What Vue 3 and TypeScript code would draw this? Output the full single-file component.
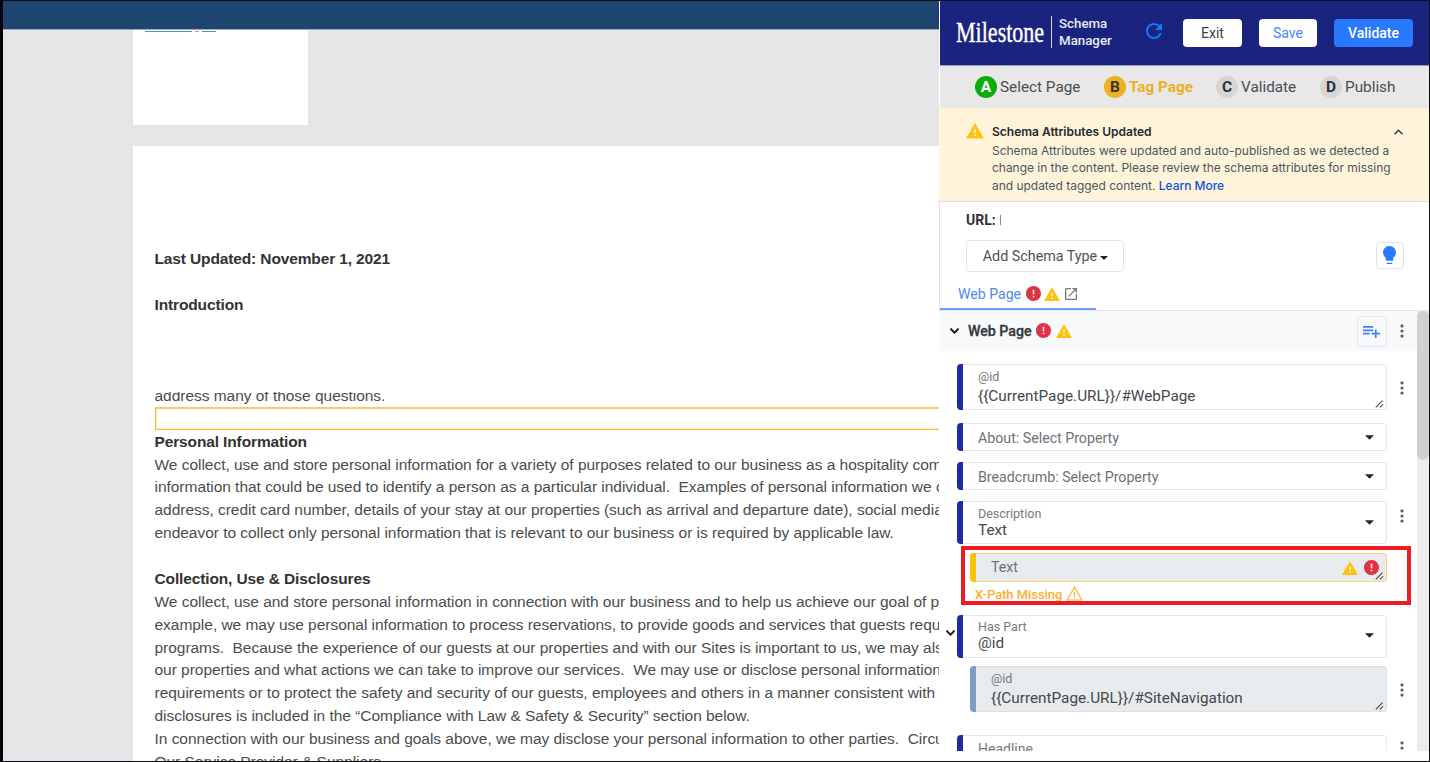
<script setup lang="ts">
import { h, type FunctionalComponent } from 'vue'

const glyphs: Record<string, { box: string; d: string; under?: string }> = {
  refresh: {
    box: '4 4 16 16',
    d: 'M17.65 6.35C16.2 4.9 14.21 4 12 4c-4.42 0-7.99 3.58-7.99 8s3.57 8 7.99 8c3.73 0 6.84-2.55 7.73-6h-2.08c-.82 2.33-3.04 4-5.65 4-3.31 0-6-2.69-6-6s2.69-6 6-6c1.66 0 3.14.69 4.22 1.78L13 11h7V4l-2.35 2.35z',
  },
  warning: {
    box: '1 2 22 19',
    d: 'M1 21h22L12 2 1 21zm12-3h-2v-2h2v2zm0-4h-2v-4h2v4z',
    under: 'M10 9h4v10h-4z',
  },
  warningOutline: {
    box: '1 2 22 19',
    d: 'M12 4.9 20.6 19.6H3.4L12 4.9M12 2 1 21h22L12 2zm.8 14.2h-1.6v1.8h1.6v-1.8zm0-6.2h-1.6v5h1.6v-5z',
  },
  error: {
    box: '2 2 20 20',
    d: 'M12 2C6.48 2 2 6.48 2 12s4.48 10 10 10 10-4.48 10-10S17.52 2 12 2zm1 15h-2v-2h2v2zm0-4h-2V7h2v6z',
    under: 'M10 6h4v12h-4z',
  },
  open: {
    box: '3 3 18 18',
    d: 'M19 19H5V5h7V3H5a2 2 0 0 0-2 2v14a2 2 0 0 0 2 2h14c1.1 0 2-.9 2-2v-7h-2v7zM14 3v2h3.59l-9.83 9.83 1.41 1.41L19 6.41V10h2V3h-7z',
  },
  playlist: {
    box: '2 6 20 14',
    d: 'M14 10H2v2h12v-2zm0-4H2v2h12V6zm4 8v-4h-2v4h-4v2h4v4h2v-4h4v-2h-4zM2 16h8v-2H2v2z',
  },
  bulb: {
    box: '5 2 14 20',
    d: 'M9 21c0 .55.45 1 1 1h4c.55 0 1-.45 1-1v-1H9v1zm3-19C8.14 2 5 5.14 5 9c0 2.38 1.19 4.47 3 5.74V17c0 .55.45 1 1 1h6c.55 0 1-.45 1-1v-2.26c1.81-1.27 3-3.36 3-5.74 0-3.86-3.14-7-7-7z',
  },
  up: { box: '6 8 12 7.4', d: 'M12 8l-6 6 1.41 1.41L12 10.83l4.59 4.58L18 14z' },
  down: { box: '6 8.6 12 7.4', d: 'M7.41 8.59 12 13.17l4.59-4.58L18 10l-6 6-6-6z' },
  caret: { box: '0 0 10 5', d: 'M0 0h10L5 5z' },
  dots: {
    box: '0 0 4 14',
    d: 'M2 .3a1.6 1.6 0 1 0 0 3.2 1.6 1.6 0 0 0 0-3.2zm0 5.1a1.6 1.6 0 1 0 0 3.2 1.6 1.6 0 0 0 0-3.2zm0 5.1a1.6 1.6 0 1 0 0 3.2 1.6 1.6 0 0 0 0-3.2z',
  },
  grip: { box: '0 0 10 9', d: 'M.4 8 8 .4l.9.8L1.3 8.8zM5 8 8.6 4.4l.9.8L5.9 8.8z' },
}

const Icon: FunctionalComponent<{ name: string }> = (props) => {
  const g = glyphs[props.name]
  return h('svg', { viewBox: g.box, 'aria-hidden': 'true' }, [
    g.under ? h('path', { d: g.under, fill: '#fff' }) : null,
    h('path', { d: g.d, fill: 'currentColor' }),
  ])
}
Icon.props = ['name']

type Kind = 'text' | 'bold' | 'blank' | 'cut' | 'highlight'
const lines: { kind: Kind; text?: string }[] = [
  { kind: 'bold', text: 'Last Updated: November 1, 2021' },
  { kind: 'blank' },
  { kind: 'bold', text: 'Introduction' },
  { kind: 'blank' },
  { kind: 'blank' },
  { kind: 'blank' },
  { kind: 'cut', text: 'address many of those questions.' },
  { kind: 'highlight' },
  { kind: 'bold', text: 'Personal Information' },
  { kind: 'text', text: 'We collect, use and store personal information for a variety of purposes related to our business as a hospitality company.' },
  { kind: 'text', text: 'information that could be used to identify a person as a particular individual.  Examples of personal information we collect' },
  { kind: 'text', text: 'address, credit card number, details of your stay at our properties (such as arrival and departure date), social media' },
  { kind: 'text', text: 'endeavor to collect only personal information that is relevant to our business or is required by applicable law.' },
  { kind: 'blank' },
  { kind: 'bold', text: 'Collection, Use & Disclosures' },
  { kind: 'text', text: 'We collect, use and store personal information in connection with our business and to help us achieve our goal of providing' },
  { kind: 'text', text: 'example, we may use personal information to process reservations, to provide goods and services that guests request' },
  { kind: 'text', text: 'programs.  Because the experience of our guests at our properties and with our Sites is important to us, we may also' },
  { kind: 'text', text: 'our properties and what actions we can take to improve our services.  We may use or disclose personal information' },
  { kind: 'text', text: 'requirements or to protect the safety and security of our guests, employees and others in a manner consistent with' },
  { kind: 'text', text: 'disclosures is included in the “Compliance with Law & Safety & Security” section below.' },
  { kind: 'text', text: 'In connection with our business and goals above, we may disclose your personal information to other parties.  Circumstances' },
  { kind: 'text', text: 'Our Service Provider & Suppliers' },
]

const steps = [
  { letter: 'A', label: 'Select Page', state: 'done' },
  { letter: 'B', label: 'Tag Page', state: 'current' },
  { letter: 'C', label: 'Validate', state: 'todo' },
  { letter: 'D', label: 'Publish', state: 'todo' },
]

interface Field {
  id: string
  label?: string
  value?: string
  placeholder?: string
  control: 'select' | 'area'
  menu?: boolean
  nested?: boolean
  warn?: boolean
  expand?: boolean
}
const fields: Field[] = [
  { id: 'page-id', label: '@id', value: '{{CurrentPage.URL}}/#WebPage', control: 'area', menu: true },
  { id: 'about', placeholder: 'About: Select Property', control: 'select' },
  { id: 'breadcrumb', placeholder: 'Breadcrumb: Select Property', control: 'select' },
  { id: 'description', label: 'Description', value: 'Text', control: 'select', menu: true },
  { id: 'description-text', placeholder: 'Text', control: 'area', nested: true, warn: true },
  { id: 'has-part', label: 'Has Part', value: '@id', control: 'select', expand: true },
  { id: 'part-id', label: '@id', value: '{{CurrentPage.URL}}/#SiteNavigation', control: 'area', menu: true, nested: true },
  { id: 'headline', label: 'Headline', value: '', control: 'select', menu: true },
]
</script>

<template>
  <div class="screen">
    <main class="site">
      <div class="site-bar"></div>
      <div class="logo-card">
        <span class="rule long"></span><span class="rule dot"></span><span class="rule short"></span>
      </div>
      <article class="policy">
        <p v-for="(line, i) in lines" :key="i" :class="['line', line.kind]">{{ line.text }}</p>
      </article>
    </main>

    <aside class="panel">
      <header class="top">
        <span class="brand"><span class="brand-text">Milestone</span></span>
        <span class="product">Schema<br />Manager</span>
        <Icon name="refresh" class="refresh" />
        <button class="btn exit">Exit</button>
        <button class="btn save">Save</button>
        <button class="btn validate">Validate</button>
      </header>

      <nav class="steps">
        <span v-for="s in steps" :key="s.letter" :class="['step', s.state, 'step-' + s.letter]">
          <b class="badge">{{ s.letter }}</b><span class="step-label">{{ s.label }}</span>
        </span>
      </nav>

      <section class="alert">
        <Icon name="warning" class="alert-icon" />
        <div class="alert-body">
          <strong class="alert-title">Schema Attributes Updated</strong>
          <p class="alert-text">
            Schema Attributes were updated and auto-published as we detected a<br />
            change in the content. Please review the schema attributes for missing<br />
            and updated tagged content. <a class="more">Learn More</a>
          </p>
        </div>
        <Icon name="up" class="alert-close" />
      </section>

      <section class="tools">
        <div class="url"><b>URL:</b><i class="url-bar"></i></div>
        <div class="tool-row">
          <button class="add-type"><span>Add Schema Type</span><Icon name="caret" class="small-caret" /></button>
          <button class="hint"><Icon name="bulb" class="bulb" /></button>
        </div>
        <div class="tab">
          <span class="tab-label">Web Page</span>
          <Icon name="error" class="error" />
          <Icon name="warning" class="warning" />
          <Icon name="open" class="open" />
        </div>
      </section>

      <div class="scroll">
        <div class="content">
          <div class="group-head">
            <Icon name="down" class="chev" />
            <b class="group-title">Web Page</b>
            <Icon name="error" class="error" />
            <Icon name="warning" class="warning" />
            <button class="add-list"><Icon name="playlist" class="playlist" /></button>
            <span class="menu"><Icon name="dots" class="dots" /></span>
          </div>

          <div v-for="f in fields" :key="f.id" :class="['item', f.id]">
            <div class="row">
              <span class="lead" :class="{ deep: f.nested }"><Icon v-if="f.expand" name="down" class="chev" /></span>
              <div :class="['field', f.control, { nested: f.nested, warn: f.warn }]">
                <span v-if="f.label" class="label">{{ f.label }}</span>
                <span v-if="f.value" class="value">{{ f.value }}</span>
                <span v-if="f.placeholder" class="placeholder">{{ f.placeholder }}</span>
                <Icon v-if="f.control === 'select'" name="caret" class="caret" />
                <Icon v-else name="grip" class="grip" />
                <span v-if="f.warn" class="marks">
                  <Icon name="warning" class="warning" /><Icon name="error" class="error" />
                </span>
              </div>
              <span class="menu"><Icon v-if="f.menu" name="dots" class="dots" /></span>
            </div>
            <div v-if="f.warn" class="missing">X-Path Missing<Icon name="warningOutline" class="outline" /></div>
            <div v-if="f.warn" class="callout"></div>
          </div>
        </div>
        <div class="track"><div class="thumb"></div></div>
      </div>
    </aside>
  </div>
</template>

<style>
body {
  margin: 0;
  overflow: hidden;
}
</style>

<style scoped>
.screen {
  box-sizing: border-box;
  display: flex;
  width: 1430px;
  height: 762px;
  overflow: hidden;
  border: 1px solid #101014;
  border-left: 3px solid #050507;
  background: #fff;
  font-family: Roboto, "Liberation Sans", sans-serif;
}
svg {
  display: block;
  flex: none;
}
button {
  padding: 0;
  border: 0;
  font-family: inherit;
}

/* Website preview */
.site {
  width: 936px;
  flex: none;
  overflow: hidden;
  background: #e4e5e7;
}
.site-bar {
  height: 28px;
  background: #1d4570;
  border-bottom: 1px solid #a3aac0;
}
.logo-card {
  display: flex;
  box-sizing: border-box;
  width: 175px;
  height: 95px;
  margin-left: 130px;
  padding: 1px 0 0 12px;
  background: #fff;
}
.rule {
  height: 1px;
  background: #4c93c9;
}
.rule.long { width: 47px; }
.rule.dot { width: 4px; margin: 0 3px; background: #d58ba5; }
.rule.short { width: 14px; }
.policy {
  box-sizing: border-box;
  height: 640px;
  margin: 21px 0 0 130px;
  padding: 101.9px 0 0 21.5px;
  background: #fff;
  font-family: "Liberation Sans", Arial, sans-serif;
}
.line {
  height: 22.87px;
  margin: 0;
  line-height: 22.87px;
  font-size: 15.5px;
  letter-spacing: -0.03px;
  white-space: pre;
  color: #4c4c4c;
}
.line.bold {
  font-weight: 700;
  letter-spacing: -0.13px;
  color: #333;
}
.line.cut {
  clip-path: inset(7px 0 0 0);
}
.line.highlight {
  box-sizing: border-box;
  margin-top: -0.5px;
  margin-bottom: 0.5px;
  border: 1px solid #fbba3c;
  border-top: 2px solid #fcca6c;
  border-right: 0;
  box-shadow: inset 1px -1px 0 #fee9bd;
}

/* Side panel */
.panel {
  display: flex;
  flex-direction: column;
  width: 490px;
  height: 760px;
  background: #fff;
}
.top {
  display: flex;
  align-items: center;
  box-sizing: border-box;
  height: 65px;
  margin-left: 1px;
  padding: 0 0 1px 16px;
  background: #1a237e;
  border-bottom: 1px solid #9a9eb8;
}
.brand {
  width: 95px;
  height: 32px;
  margin-top: -1px;
  border-right: 1px solid #d9dbec;
}
.brand-text {
  display: block;
  width: 130px;
  transform: scaleX(0.76);
  transform-origin: 0 0;
  font: 400 29px/33px "Liberation Serif", serif;
  color: #fff;
  -webkit-text-stroke: 0.4px #fff;
}
.product {
  width: 87px;
  margin: 0 0 0 7px;
  font-size: 13.3px;
  line-height: 16.5px;
  font-weight: 500;
  color: #e9eaf5;
}
.refresh {
  width: 16px;
  height: 16px;
  margin-top: -3px;
  color: #0d7bff;
}
.btn {
  height: 28px;
  border-radius: 4px;
  background: #fff;
  font-size: 14px;
}
.exit { width: 59px; margin-left: 21px; color: #3c4043; }
.save { width: 58px; margin-left: 17px; color: #4a86f7; }
.validate { width: 79px; margin-left: 17px; background: #2979ff; color: #fff; font-weight: 500; }

.steps {
  display: flex;
  align-items: center;
  height: 42px;
  margin-left: 1px;
  background: #e8e8e8;
}
.step {
  display: flex;
  align-items: center;
  font-size: 15.3px;
  color: #4a4d52;
}
.step-A { width: 129px; margin-left: 35px; }
.step-B { width: 112px; }
.step-C { width: 104px; }
.badge {
  width: 22px;
  height: 22px;
  margin-right: 3px;
  border-radius: 50%;
  background: #d6d6d6;
  color: #2c3035;
  text-align: center;
  line-height: 22px;
  font-size: 15.5px;
}
.done .badge { background: #0aad0a; color: #fff; }
.current .badge { background: #ecb121; color: #3b3420; }
.current .step-label { color: #ecb121; font-weight: 700; }

.alert {
  display: flex;
  align-items: flex-start;
  box-sizing: border-box;
  height: 94px;
  padding: 15px 26px 0 27px;
  background: #fff4da;
  border-bottom: 1px solid #e4e2df;
  font-family: Inter, sans-serif;
}
.alert-icon { width: 18px; height: 15.5px; color: #ffc210; }
.alert-body { width: 407px; margin-left: 8px; }
.alert-title {
  display: block;
  font-size: 12px;
  line-height: 18px;
  font-weight: 600;
  color: #222a33;
}
.alert-text {
  margin: 0.6px 0 0;
  font-size: 12px;
  line-height: 17.8px;
  letter-spacing: -0.03px;
  white-space: nowrap;
  color: #4c5661;
}
.more { color: #0d52e5; font-weight: 500; }
.alert-close { width: 9px; height: 6px; margin-top: 6px; margin-left: -5px; color: #333b45; }

.tools {
  display: flex;
  flex-direction: column;
  box-sizing: border-box;
  height: 109px;
  padding: 0 24px 0 26px;
  border-left: 1px solid #e2e3e6;
  border-bottom: 1px solid #e4e6e9;
}
.url {
  display: flex;
  align-items: center;
  box-sizing: border-box;
  height: 38px;
  padding-bottom: 1px;
  font-size: 14px;
  color: #2e3338;
}
.url-bar { width: 1px; height: 10px; margin-left: 4px; background: #8a8a8a; }
.tool-row {
  display: flex;
  align-items: center;
  justify-content: space-between;
  height: 33px;
  padding-top: 0.5px;
}
.add-type {
  display: flex;
  align-items: center;
  justify-content: center;
  box-sizing: border-box;
  width: 158px;
  height: 32px;
  padding-left: 1px;
  border: 1px solid #e1e4e8;
  border-radius: 4px;
  background: #fff;
  font-size: 14.3px;
  color: #4e5358;
}
.small-caret { width: 8px; height: 4px; margin: 4px 0 0 3px; color: #222; }
.hint {
  display: flex;
  align-items: center;
  justify-content: center;
  box-sizing: border-box;
  width: 28px;
  height: 27px;
  margin: -2px 1px 0 0;
  border: 1px solid #dfe3ea;
  border-radius: 4px;
  background: #fff;
}
.bulb { width: 13px; height: 18.5px; margin-left: -1px; color: #2979ff; }
.tab {
  display: flex;
  align-items: center;
  box-sizing: border-box;
  width: 156px;
  height: 38px;
  margin-left: -26px;
  padding: 7px 0 0 18px;
  border-bottom: 2px solid #6b9ff7;
  font-size: 14.1px;
  color: #4a8af4;
}
.tab .error { margin-left: 5px; }
.tab .warning { margin-left: 3px; }
.error { width: 15px; height: 15px; color: #dc3545; }
.warning { width: 16px; height: 14px; color: #ffc210; }
.open { width: 12px; height: 12px; margin-left: 5px; color: #777b80; }

.scroll {
  display: flex;
  height: 440px;
  margin-left: 1px;
  overflow: hidden;
}
.content { width: 477px; flex: none; }
.track { flex: 1; background: #ececec; }
.thumb { height: 149px; border-radius: 6px; background: #d0d0d0; }

.group-head {
  display: flex;
  align-items: center;
  height: 40px;
  padding-left: 10px;
  background: #f8f9fb;
  color: #33383d;
}
.chev { width: 9px; height: 6px; color: #111; stroke: currentColor; stroke-width: 0.8px; }
.group-title { margin: -1px 4px 0 9px; font-size: 14.2px; font-weight: 500; -webkit-text-stroke: 0.3px; }
.group-head .error, .group-head .warning { margin-top: -1px; }
.group-head .warning { margin-left: 5px; }
.add-list {
  display: flex;
  align-items: center;
  justify-content: center;
  box-sizing: border-box;
  width: 30px;
  height: 31px;
  margin: 1px 0 0 auto;
  border: 1px solid #e3e6ea;
  border-radius: 4px;
  background: transparent;
}
.playlist { width: 17px; height: 12px; margin-left: -1px; color: #3d82f5; }
.menu { display: flex; justify-content: center; box-sizing: border-box; width: 30px; padding-right: 1px; flex: none; }
.dots { width: 4px; height: 14px; color: #5f5f5f; }

.item { position: relative; margin-bottom: 11px; }
.row { display: flex; align-items: center; }
.lead { display: flex; justify-content: center; width: 17px; flex: none; }
.lead .chev { margin: -7px 0 0 3px; }
.lead.deep { width: 30px; }
.field {
  position: relative;
  display: flex;
  flex: 1;
  flex-direction: column;
  box-sizing: border-box;
  height: 43px;
  padding: 3.5px 0 0 21px;
  border: 1px solid #e6e9ec;
  border-left: 0;
  border-radius: 4px;
  background: #fff;
}
.field::before {
  content: "";
  position: absolute;
  inset: -1px auto -1px 0;
  width: 6px;
  border-radius: 4px 0 0 4px;
  background: #1f2aa8;
}
.field.nested { background: #e7ebee; border-color: #dde1e5; }
.field.nested::before { background: #7b9fc3; }
.field.warn { border-color: #ffd768; }
.field.warn::before { background: #ffc107; }
.label { font-size: 12.5px; line-height: 16px; color: #75797e; }
.value { font-size: 15.3px; line-height: 17.5px; color: #44484c; }
.placeholder { padding-top: 1px; font-size: 14.2px; line-height: 18px; color: #6c7278; }
.warn .placeholder { padding-top: 0; }
.caret { position: absolute; right: 12px; top: 50%; width: 9px; height: 5px; margin-top: -2px; color: #212529; }
.grip { position: absolute; right: 2px; bottom: 1px; width: 9px; height: 8px; color: #444; }

.page-id { margin: 13px 0 13px; }
.page-id .field, .part-id .field { height: 46px; }
.page-id .value, .part-id .value { margin-top: 3.5px; }
.page-id .dots, .part-id .dots { margin-top: 2px; }
.about .field, .breadcrumb .field { height: 28px; }
.description { margin-bottom: 9px; }
.description .menu { margin-top: -14px; }
.description .caret { margin-top: -3px; }
.description-text { height: 51px; }
.description-text .field { height: 29px; }
.marks { position: absolute; right: 7px; top: 6px; display: flex; align-items: center; gap: 6px; }
.has-part { margin-bottom: 8px; }
.has-part .caret { margin-top: -4px; }
.has-part .label, .has-part .value { position: relative; top: -1px; }
.part-id { margin-bottom: 23px; }
.headline .menu { margin-top: -17px; }
.headline .label { padding-top: 1px; font-size: 14px; }
.missing {
  display: flex;
  align-items: center;
  height: 22px;
  padding: 1px 0 0 35px;
  font-size: 12.9px;
  font-weight: 500;
  color: #f9b02b;
}
.outline { width: 17px; height: 14.5px; margin-left: 4px; margin-top: -1px; }
.callout {
  position: absolute;
  left: 21px;
  top: -7px;
  box-sizing: border-box;
  width: 450px;
  height: 59px;
  border: 4px solid #ed1c24;
}
</style>
